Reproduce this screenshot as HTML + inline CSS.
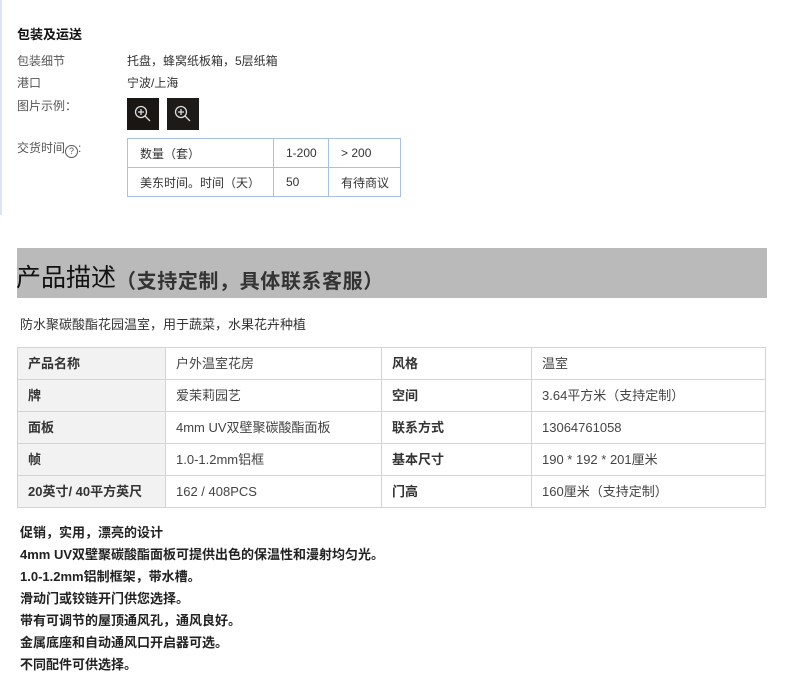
<!DOCTYPE html>
<html><head><meta charset="utf-8"><style>
body{margin:0;width:790px;height:700px;background:#fff;font-family:"Liberation Sans","Noto Sans CJK SC",sans-serif;color:#333;position:relative;overflow:hidden}
.a{position:absolute;white-space:nowrap}
.lbl{font-size:12px;color:#555}
.val{font-size:12px;color:#333}
table{border-collapse:collapse;position:absolute}
td{vertical-align:middle}
.t1 td{border:1px solid #a9bfe6;font-size:12px;color:#333;padding:0 0 0 12px;height:28px}
.t2 td{border:1px solid #d4d4d4;font-size:13px;height:31px;padding:0 0 0 10px;color:#444;line-height:16px}
.t2 td.h{background:#f2f2f2;font-weight:bold;color:#333}
.t2 td.b{font-weight:bold;color:#333}
.ic{position:absolute;width:32px;height:32px;background:#1a1614}
.ic svg{position:absolute;left:6px;top:6px}
.p{font-size:13px;font-weight:bold;color:#222;line-height:22px}
</style></head><body>
<div class="a" style="left:0;top:0;width:2px;height:215px;background:#dbe5f5"></div>
<div class="a" style="left:17px;top:24px;font-size:13px;font-weight:bold;color:#111">包装及运送</div>
<div class="a lbl" style="left:17px;top:52px">包装细节</div>
<div class="a val" style="left:127px;top:52px">托盘，蜂窝纸板箱，5层纸箱</div>
<div class="a lbl" style="left:17px;top:74px">港口</div>
<div class="a val" style="left:127px;top:74px">宁波/上海</div>
<div class="a lbl" style="left:17px;top:97px">图片示例：</div>
<div class="ic" style="left:127px;top:98px"><svg width="20" height="20" viewBox="0 0 20 20" fill="none" stroke="#ddd" stroke-width="1.3"><circle cx="8" cy="8" r="5.5"/><path d="M8 5v6M5 8h6M12 12l5 5"/></svg></div>
<div class="ic" style="left:167px;top:98px;background:#1d1a17"><svg width="20" height="20" viewBox="0 0 20 20" fill="none" stroke="#ddd" stroke-width="1.3"><circle cx="8" cy="8" r="5.5"/><path d="M8 5v6M5 8h6M12 12l5 5"/></svg></div>
<div class="a lbl" style="left:17px;top:139px">交货时间<span style="display:inline-block;width:11px;height:11px;border:1px solid #555;border-radius:50%;font-size:9px;line-height:11px;text-align:center;vertical-align:-2px">?</span>:</div>
<table class="t1" style="left:127px;top:138px;width:274px">
<tr><td style="width:133px">数量（套）</td><td style="width:42px">1-200</td><td>&gt; 200</td></tr>
<tr><td>美东时间。时间（天）</td><td>50</td><td>有待商议</td></tr>
</table>
<div class="a" style="left:17px;top:248px;width:750px;height:50px;background:#bababa"></div>
<div class="a" style="left:16px;top:258px;font-size:25px;color:#111">产品描述<span style="font-size:20px;color:#333;font-weight:bold;letter-spacing:0.6px;vertical-align:-2px">（支持定制，具体联系客服）</span></div>
<div class="a" style="left:20px;top:314px;font-size:13px;color:#333">防水聚碳酸酯花园温室，用于蔬菜，水果花卉种植</div>
<table class="t2" style="left:17px;top:347px;width:749px">
<tr><td class="h" style="width:137px">产品名称</td><td style="width:205px">户外温室花房</td><td class="b" style="width:139px">风格</td><td>温室</td></tr>
<tr><td class="h">牌</td><td>爱茉莉园艺</td><td class="b">空间</td><td>3.64平方米（支持定制）</td></tr>
<tr><td class="h">面板</td><td>4mm UV双壁聚碳酸酯面板</td><td class="b">联系方式</td><td>13064761058</td></tr>
<tr><td class="h">帧</td><td>1.0-1.2mm铝框</td><td class="b">基本尺寸</td><td>190 * 192 * 201厘米</td></tr>
<tr><td class="h">20英寸/ 40平方英尺</td><td>162 / 408PCS</td><td class="b">门高</td><td>160厘米（支持定制）</td></tr>
</table>
<div class="a p" style="left:20px;top:522px">促销，实用，漂亮的设计<br>4mm UV双壁聚碳酸酯面板可提供出色的保温性和漫射均匀光。<br>1.0-1.2mm铝制框架，带水槽。<br>滑动门或铰链开门供您选择。<br>带有可调节的屋顶通风孔，通风良好。<br>金属底座和自动通风口开启器可选。<br>不同配件可供选择。</div>
</body></html>
